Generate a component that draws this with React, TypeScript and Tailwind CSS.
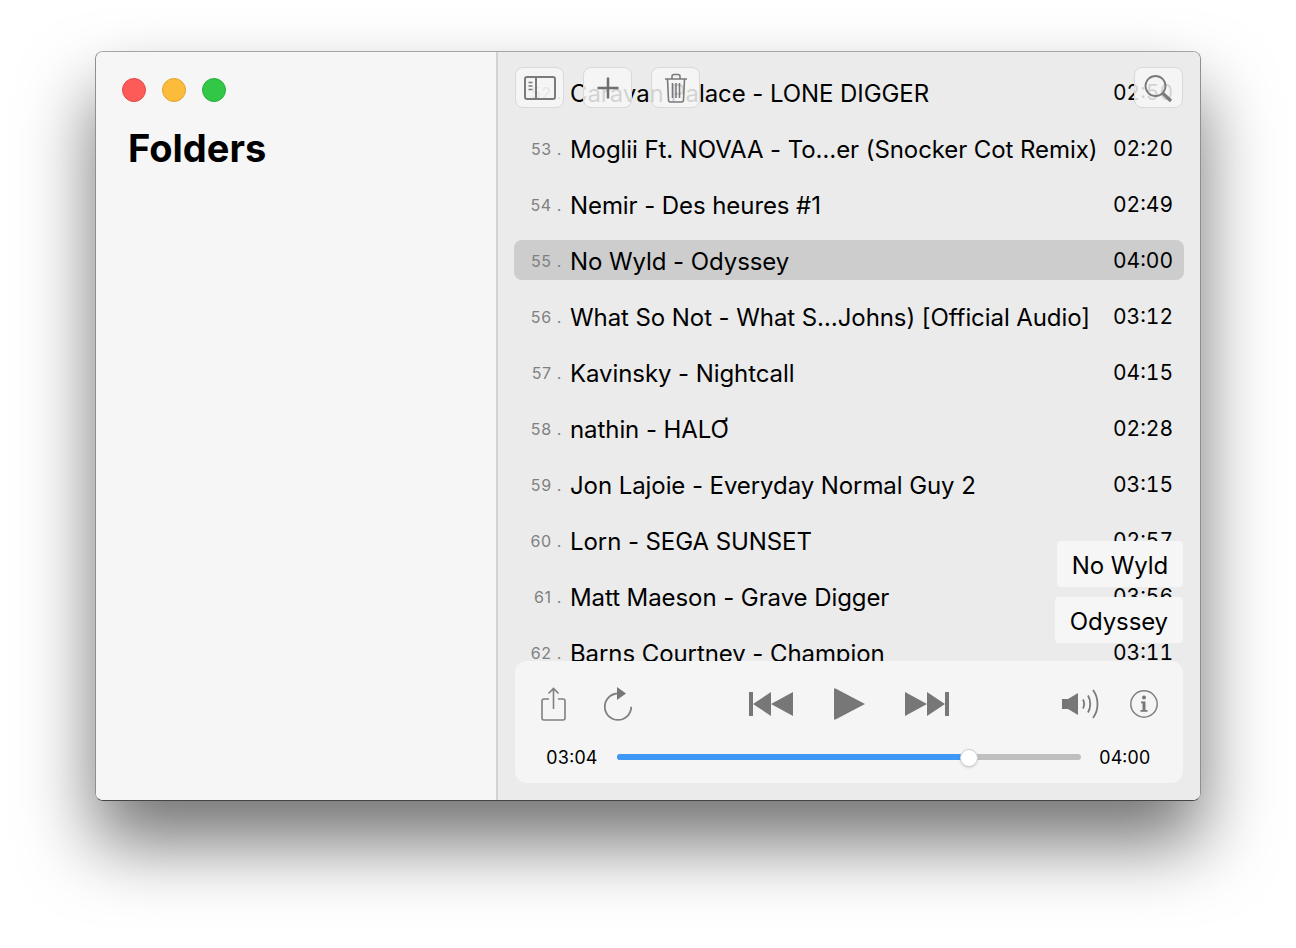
import React from "react";

const tracks = [
  { n: 52, title: "Caravan Palace - LONE DIGGER", time: "02:50" },
  { n: 53, title: "Moglii Ft. NOVAA - To…er (Snocker Cot Remix)", time: "02:20" },
  { n: 54, title: "Nemir - Des heures #1", time: "02:49" },
  { n: 55, title: "No Wyld - Odyssey", time: "04:00", active: true },
  { n: 56, title: "What So Not - What S…Johns) [Official Audio]", time: "03:12" },
  { n: 57, title: "Kavinsky - Nightcall", time: "04:15" },
  { n: 58, title: "nathin - HALO\u031B", time: "02:28" },
  { n: 59, title: "Jon Lajoie - Everyday Normal Guy 2", time: "03:15" },
  { n: 60, title: "Lorn - SEGA SUNSET", time: "02:57" },
  { n: 61, title: "Matt Maeson - Grave Digger", time: "03:56" },
  { n: 62, title: "Barns Courtney - Champion", time: "03:11" },
];

const ToolButton: React.FC<{ children: React.ReactNode }> = ({ children }) => (
  <div className="flex h-[41px] w-[49px] items-center justify-center rounded-lg border border-[#d9d9d9] bg-[#f7f7f7]/85">
    {children}
  </div>
);

const Row: React.FC<{ n: number; title: string; time: string; active?: boolean }> = ({ n, title, time, active }) => (
  <div className={`mb-4 flex h-10 items-center rounded-lg ${active ? "bg-[#cdcdcd]" : ""}`}>
    <span className="w-[48px] shrink-0 translate-y-px text-right text-[16px] tracking-[0.6px] text-[#808080]">{n} .</span>
    <span className="ml-[8px] flex-1 translate-y-0.5 truncate text-[24px] leading-10 tracking-[-0.08px] text-black">{title}</span>
    <span className="mr-[14px] w-[57px] translate-y-px text-[21px] tabular-nums text-black">{time}</span>
  </div>
);

export default function App() {
  return (
    <div className="h-[948px] overflow-hidden bg-white pl-[95px] pt-[51px] font-['Inter','Liberation_Sans',sans-serif]">
      <div className="flex h-[750px] w-[1106px] overflow-hidden rounded-lg border border-[#8f8f8f] border-t-[#a5a5a5] border-b-[#444444] shadow-[0_42px_72px_rgba(0,0,0,0.55)]">
        <aside className="w-[402px] shrink-0 border-r-2 border-[#d2d2d2] bg-[#f6f6f6] pl-[26px] pt-[26px]">
          <div className="flex gap-4">
            <span className="h-6 w-6 rounded-full border border-[#e5484a] bg-[#fc5b57]" />
            <span className="h-6 w-6 rounded-full border border-[#e0a32e] bg-[#fdbb3b]" />
            <span className="h-6 w-6 rounded-full border border-[#2aae3f] bg-[#33c748]" />
          </div>
          <h1 className="ml-[6px] mt-[16px] text-[38px] font-bold leading-[60px] text-black">Folders</h1>
        </aside>

        <main className="relative flex-1 overflow-hidden bg-[#ebebeb] pl-4 pr-4 pt-[20px]">
          {tracks.map((t) => (
            <Row key={t.n} {...t} />
          ))}

          {/* toolbar floats over the list */}
          <div className="absolute left-[17px] right-[17px] top-[15px] flex gap-[19px]">
            <ToolButton>
              <svg width="34" height="26" viewBox="0 0 34 26" fill="none" stroke="#7a7a7a" strokeWidth="2">
                <rect x="2" y="2" width="30" height="22" rx="2" />
                <path d="M13 2v22" />
                <path d="M5.5 7.5h4M5.5 11h4M5.5 14.500h4" strokeWidth="1.500" />
              </svg>
            </ToolButton>
            <ToolButton>
              <svg width="24" height="24" viewBox="0 0 24 24" fill="none" stroke="#6f6f6f" strokeWidth="2.500">
                <path d="M12 1.500v21M1.500 12h21" />
              </svg>
            </ToolButton>
            <ToolButton>
              <svg width="24" height="30" viewBox="0 0 24 30" fill="none" stroke="#7a7a7a" strokeWidth="1.600">
                <path d="M1 6h22M8 6V3.500a2 2 0 0 1 2-2h4a2 2 0 0 1 2 2V6" />
                <path d="M3.500 6l1 21a2 2 0 0 0 2 2h11a2 2 0 0 0 2-2l1-21" />
                <path d="M8.500 10v15M12 10v15M15.500 10v15" />
              </svg>
            </ToolButton>
            <div className="ml-auto">
              <ToolButton>
                <svg width="30" height="30" viewBox="0 0 30 30" fill="none" stroke="#7a7a7a">
                  <circle cx="11.500" cy="13" r="10" strokeWidth="1.800" />
                  <path d="M19 20.500L27 28" strokeWidth="3.200" />
                </svg>
              </ToolButton>
            </div>
          </div>

          {/* now playing labels */}
          <div className="absolute right-[17px] top-[489px] flex flex-col items-end gap-[10px]">
            <div className="flex h-[46px] items-center rounded-sm bg-[#f6f6f6] px-[15px] pt-1 text-[24px] tracking-[-0.12px] text-black">No Wyld</div>
            <div className="flex h-[46px] items-center rounded-sm bg-[#f6f6f6] px-[15px] pt-1 text-[24px] tracking-[-0.12px] text-black">Odyssey</div>
          </div>

          {/* player */}
          <div className="absolute bottom-[17px] left-[17px] right-[17px] h-[122px] rounded-xl bg-[#f5f5f5] pt-[24px]">
            <div className="flex h-[38px] items-center pl-[26px]">
              <svg width="25" height="34" viewBox="0 0 25 34" fill="none" stroke="#808080" strokeWidth="1.600">
                <path d="M8 12H3a2 2 0 0 0-2 2v17a2 2 0 0 0 2 2h19a2 2 0 0 0 2-2V14a2 2 0 0 0-2-2h-5" />
                <path d="M12.500 22V1.500M7.500 6.500l5-5 5 5" />
              </svg>
              <svg className="ml-[37px]" width="30" height="34" viewBox="0 0 30 34">
                <path d="M15 6.500a13.200 13.200 0 1 0 13.200 13.200" fill="none" stroke="#808080" strokeWidth="1.800" />
                <path d="M14 0l9 6.500-9 6.500z" fill="#777777" />
              </svg>
              <svg className="ml-[116px]" width="44" height="24" viewBox="0 0 44 24" fill="#777777">
                <path d="M0 0h4v24H0zM4 12L22 0v24zM22 12L44 0v24z" />
              </svg>
              <svg className="ml-[41px]" width="31" height="32" viewBox="0 0 31 32" fill="#777777">
                <path d="M0 1.500v29a1 1 0 0 0 1.500 1L31 16 1.500.5A1 1 0 0 0 0 1.500z" />
              </svg>
              <svg className="ml-[40px]" width="44" height="24" viewBox="0 0 44 24" fill="#777777">
                <path d="M44 0h-4v24h4zM40 12L22 0v24zM22 12L0 0v24z" />
              </svg>
              <svg className="ml-[113px]" width="37" height="30" viewBox="0 0 37 30">
                <path d="M0 10h6L16 4v22L6 20H0z" fill="#777777" />
                <path d="M21 10.500c1.500 3 1.500 6 0 9M26 6.500c3 5 3 12 0 17M31 1c6 8 6 20 0 28" fill="none" stroke="#7a7a7a" strokeWidth="1.800" />
              </svg>
              <svg className="ml-[31px]" width="28" height="28" viewBox="0 0 28 28">
                <circle cx="14" cy="14" r="13.200" fill="none" stroke="#808080" strokeWidth="1.500" />
                <circle cx="14" cy="7.500" r="2" fill="#777777" />
                <path d="M11 11.500h4.500V20H17.500v1.800h-7V20h2V13.300h-1.500z" fill="#777777" />
              </svg>
            </div>
            <div className="mt-[22px] flex h-6 items-center text-[18px] tabular-nums text-black">
              <span className="ml-[31px] w-[71px]">03:04</span>
              <div className="relative -mt-px h-1.5 w-[464px] rounded-full bg-[#bfbfbf]">
                <div className="h-1.5 w-[351px] rounded-full bg-[#3f97f6]" />
                <span className="absolute left-[343px] top-[-5px] h-[18px] w-[18px] rounded-full border border-[#d0d0d0] bg-white shadow-sm" />
              </div>
              <span className="ml-[18px]">04:00</span>
            </div>
          </div>
        </main>
      </div>
    </div>
  );
}
